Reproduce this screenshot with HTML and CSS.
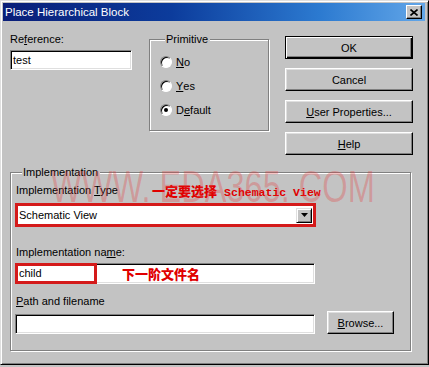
FILE: index.html
```html
<!DOCTYPE html>
<html>
<head>
    <meta charset="UTF-8">
    <title>Place Hierarchical Block</title>
    <link rel="stylesheet" href="styles.css">
</head>
<body>
	<div class="dialog">
		<div class="titlebar">
			<span class="title">Place Hierarchical Block</span>
			<span class="close">
				<svg width="8" height="7" viewBox="0 0 8 7"><path d="M0.5 0.5 L7.5 6.5 M7.5 0.5 L0.5 6.5" stroke="#000" stroke-width="1.6"/></svg>
			</span>
		</div>
		<div class="top">
			<div class="ref">
				<div class="label">Re<u>f</u>erence:</div>
				<div class="field ref-field">test</div>
			</div>
			<fieldset class="group primitive">
				<legend>Primitive</legend>
				<div class="radio"><span class="dot"></span><u>N</u>o</div>
				<div class="radio"><span class="dot"></span><u>Y</u>es</div>
				<div class="radio"><span class="dot on"></span>D<u>e</u>fault</div>
			</fieldset>
			<div class="buttons">
				<div class="btn default"><span>OK</span></div>
				<div class="btn"><span>Cancel</span></div>
				<div class="btn"><span><u>U</u>ser Properties...</span></div>
				<div class="btn"><span><u>H</u>elp</span></div>
			</div>
		</div>
		<fieldset class="group impl">
			<legend>Implementation</legend>
			<div class="row">
				<div class="label type-label">Implementation <u>T</u>ype</div>
				<div class="note"><span class="cn">一定要选择</span> <span class="en">Schematic View</span></div>
			</div>
			<div class="redbox combo-wrap">
				<div class="combo">
					<span>Schematic View</span>
					<span class="drop"><svg width="7" height="4" viewBox="0 0 7 4"><path d="M0 0 H7 L3.5 4 Z" fill="#000"/></svg></span>
				</div>
			</div>
			<div class="label name-label">Implementation na<u>m</u>e:</div>
			<div class="field name-field">
				<div class="redbox child">child</div>
				<span class="note cn">下一阶文件名</span>
			</div>
			<div class="label path-label"><u>P</u>ath and filename</div>
			<div class="path-row">
				<div class="field path-field"></div>
				<div class="btn browse"><span><u>B</u>rowse...</span></div>
			</div>
		</fieldset>
		<div class="watermark">WWW. EDA365. COM</div>
	</div>
</body>
</html>
```

FILE: styles.css
```css
*{
	padding: 0;
	margin: 0;
	box-sizing: border-box;
}
body{
	background: #c3c3c3;
	font-family: "Liberation Sans", Arial, sans-serif;
	font-size: 11px;
	color: #000;
}
u{
	text-decoration: underline;
	text-underline-offset: 1px;
}
.dialog{
	position: relative;
	width: 429px;
	height: 365px;
	background: #c3c3c3;
	border: 1px solid;
	border-color: #dfdfdf #000 #000 #dfdfdf;
	box-shadow: inset 1px 1px 0 #fff, inset -1px -1px 0 #808080;
	padding: 2px;
	overflow: hidden;
}
.titlebar{
	height: 18px;
	margin-right: 1px;
	display: flex;
	align-items: center;
	justify-content: space-between;
	padding: 0 3px 0 2px;
	background: linear-gradient(to right, #0a1e78 0%, #0c3c9c 40%, #2c7ad0 75%, #62a6e8 100%);
	color: #fff;
	font-size: 11.5px;
}
.close{
	width: 16px;
	height: 14px;
	display: flex;
	align-items: center;
	justify-content: center;
	background: #c3c3c3;
	border: 1px solid;
	border-color: #fff #000 #000 #fff;
	box-shadow: inset -1px -1px 0 #808080;
}
.top{
	display: flex;
	align-items: flex-start;
	margin: 9px 0 0 7px;
}
.label{
	line-height: 14px;
	white-space: nowrap;
}
.ref{
	width: 122px;
	margin-top: 2px;
}
.ref .label{
	margin-bottom: 4px;
}
.field{
	background: #fff;
	border: 1px solid;
	border-color: #808080 #fff #fff #808080;
	box-shadow: inset 1px 1px 0 #000, inset -1px -1px 0 #dfdfdf;
	line-height: 16px;
	padding: 1px 2px;
	white-space: nowrap;
}
.ref-field{
	height: 20px;
}
.group{
	border: 1px solid #808080;
	box-shadow: 1px 1px 0 #fff, inset 1px 1px 0 #fff;
}
.group legend{
	line-height: 13px;
	padding: 0 2px 0 1px;
	margin-left: 5px;
	background: #c3c3c3;
}
.primitive{
	width: 120px;
	margin: 3px 0 0 17px;
	padding: 4px 0 8px 10px;
}
.radio{
	height: 24px;
	display: flex;
	align-items: center;
	line-height: 13px;
}
.dot{
	width: 12px;
	height: 12px;
	border-radius: 50%;
	margin-right: 4px;
	background: #fff;
	border: 1px solid;
	border-color: #808080 #fff #fff #808080;
	box-shadow: inset 1px 1px 0 #000;
	display: flex;
	align-items: center;
	justify-content: center;
}
.dot.on::after{
	content: "";
	width: 4px;
	height: 4px;
	border-radius: 50%;
	background: #000;
}
.buttons{
	width: 128px;
	margin: 6px 0 0 16px;
	display: flex;
	flex-direction: column;
	gap: 9px;
}
.btn{
	height: 23px;
	display: flex;
	align-items: center;
	justify-content: center;
	background: #c3c3c3;
	border: 1px solid;
	border-color: #fff #000 #000 #fff;
	box-shadow: inset -1px -1px 0 #808080, inset 1px 1px 0 #dfdfdf;
	white-space: nowrap;
}
.btn.default{
	border: 1px solid #000;
	box-shadow: inset 1px 1px 0 #fff, inset -1px -1px 0 #000, inset -2px -2px 0 #808080;
}
.impl{
	width: 401px;
	margin: 11px 0 0 7px;
	padding: 4px 5px 16px 5px;
}
.impl legend{
	margin-left: 6px;
}
.row{
	display: flex;
	align-items: center;
	height: 14px;
}
.type-label{
	width: 136px;
}
.note{
	color: #e00000;
	font-weight: bold;
	white-space: nowrap;
}
.cn{
	font-family: "Noto Sans CJK SC", sans-serif;
	font-size: 13px;
	font-weight: 900;
	color: #e00000;
}
.en{
	font-family: "Liberation Mono", monospace;
	font-size: 11.5px;
	margin-left: 4px;
}
.redbox{
	border: 3px solid #d41a1a;
}
.combo-wrap{
	width: 301px;
	height: 24px;
	margin: 6px 0 0 -1px;
}
.combo{
	height: 18px;
	background: #fff;
	display: flex;
	align-items: center;
	justify-content: space-between;
	padding: 0 1px 0 1px;
	line-height: 14px;
}
.drop{
	width: 16px;
	height: 15px;
	display: flex;
	align-items: center;
	justify-content: center;
	background: #c3c3c3;
	border: 1px solid;
	border-color: #dfdfdf #000 #000 #dfdfdf;
	box-shadow: inset 1px 1px 0 #fff, inset -1px -1px 0 #808080;
}
.name-label{
	margin-top: 18px;
}
.name-field{
	width: 300px;
	height: 21px;
	margin: 4px 0 0 -1px;
	padding: 0;
	display: flex;
	align-items: center;
}
.child{
	width: 82px;
	height: 21px;
	margin: 0 0 0 -1px;
	padding: 0 0 0 1px;
	line-height: 15px;
	align-self: flex-start;
	margin-top: -1px;
}
.name-field .note{
	margin-left: 25px;
}
.path-label{
	margin-top: 10px;
}
.path-row{
	display: flex;
	align-items: flex-end;
	margin: 3px 0 0 -1px;
}
.path-field{
	width: 300px;
	height: 20px;
}
.browse{
	width: 67px;
	margin-left: 12px;
}
.watermark{
	position: absolute;
	left: 50px;
	top: 161px;
	font-family: "Liberation Sans", Arial, sans-serif;
	font-size: 44px;
	white-space: nowrap;
	color: rgba(232, 50, 50, 0.28);
	transform: scaleX(0.74);
	transform-origin: left top;
	pointer-events: none;
}
```
